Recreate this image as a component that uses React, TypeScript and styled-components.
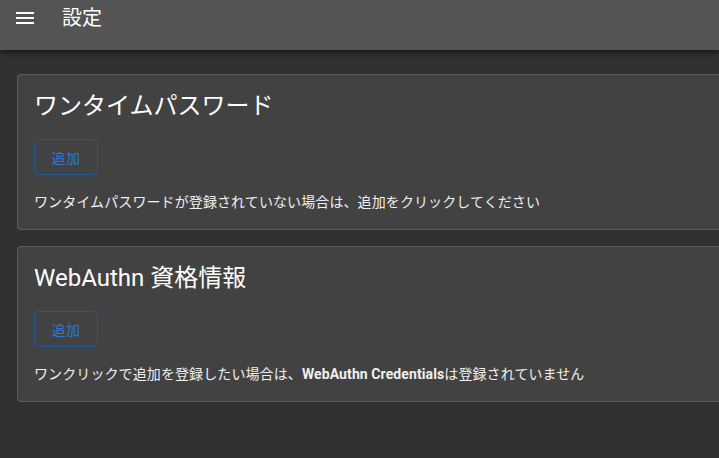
import { FC } from 'react';
import styled, { createGlobalStyle } from 'styled-components';

const GlobalStyle = createGlobalStyle`
  html, body {
    margin: 0;
    padding: 0;
    background: #303030;
    overflow: hidden;
  }
  body {
    font-family: Roboto, "Noto Sans CJK JP", sans-serif;
    color: #fff;
  }
`;

const MenuIcon: FC = () => (
  <svg width="18" height="14" viewBox="0 0 18 14">
    <rect x="0" y="1" width="18" height="2" fill="#fff" />
    <rect x="0" y="6" width="18" height="2" fill="#fff" />
    <rect x="0" y="11" width="18" height="2" fill="#fff" />
  </svg>
);

type SettingCardProps = {
  title: string;
  children: React.ReactNode;
};

const SettingCard: FC<SettingCardProps> = ({ title, children }) => (
  <StyledCard>
    <h2 className="title">{title}</h2>
    <OutlineButton type="button">追加</OutlineButton>
    <p className="note">{children}</p>
  </StyledCard>
);

export default function App() {
  return (
    <>
      <GlobalStyle />
      <Page>
        <AppBar>
          <button className="menu" type="button" aria-label="menu">
            <MenuIcon />
          </button>
          <span className="title">設定</span>
        </AppBar>
        <Content>
          <SettingCard title="ワンタイムパスワード">
            ワンタイムパスワードが登録されていない場合は、追加をクリックしてください
          </SettingCard>
          <SettingCard title="WebAuthn 資格情報">
            ワンクリックで追加を登録したい場合は、<b>WebAuthn Credentials</b>は登録されていません
          </SettingCard>
        </Content>
      </Page>
    </>
  );
}

const Page = styled.div`
  width: 719px;
  height: 458px;
  overflow: hidden;
  background: #303030;
`;

const AppBar = styled.header`
  height: 50px;
  background: #545454;
  display: flex;
  align-items: flex-start;
  box-shadow: 0 2px 4px rgba(0, 0, 0, 0.35), 0 4px 6px rgba(0, 0, 0, 0.2);
  position: relative;

  > .menu {
    width: 18px;
    height: 36px;
    margin-left: 16px;
    padding: 0;
    border: 0;
    background: none;
    display: flex;
    align-items: center;
  }

  > .title {
    margin-left: 28px;
    font-size: 20px;
    line-height: 36px;
    color: #fff;
  }
`;

const Content = styled.main`
  width: 760px;
  padding: 24px 0 0 17px;
  display: flex;
  flex-direction: column;
  gap: 16px;
`;

const StyledCard = styled.section`
  background: #424242;
  border: 1px solid #5c5c5c;
  border-right: 0;
  border-radius: 4px 0 0 4px;
  padding: 15px 16px 17px 16px;
  display: flex;
  flex-direction: column;
  align-items: flex-start;

  > .title {
    margin: 0;
    font-size: 24px;
    line-height: 32px;
    font-weight: 400;
    color: #fff;
  }

  > .note {
    margin: 17px 0 0;
    height: 20px;
    font-size: 14px;
    line-height: 20px;
    letter-spacing: 0.1px;
    color: #f0f0f0;

    b {
      font-weight: 700;
      letter-spacing: 0.1px;
    }
  }
`;

const OutlineButton = styled.button`
  margin-top: 17px;
  width: 64px;
  height: 36px;
  background: transparent;
  border: 1px solid #1d5a98;
  border-radius: 4px;
  color: #2b7bd3;
  font-family: Roboto, "Noto Sans CJK JP", sans-serif;
  font-size: 14px;
  letter-spacing: 0.5px;
  cursor: pointer;
`;
